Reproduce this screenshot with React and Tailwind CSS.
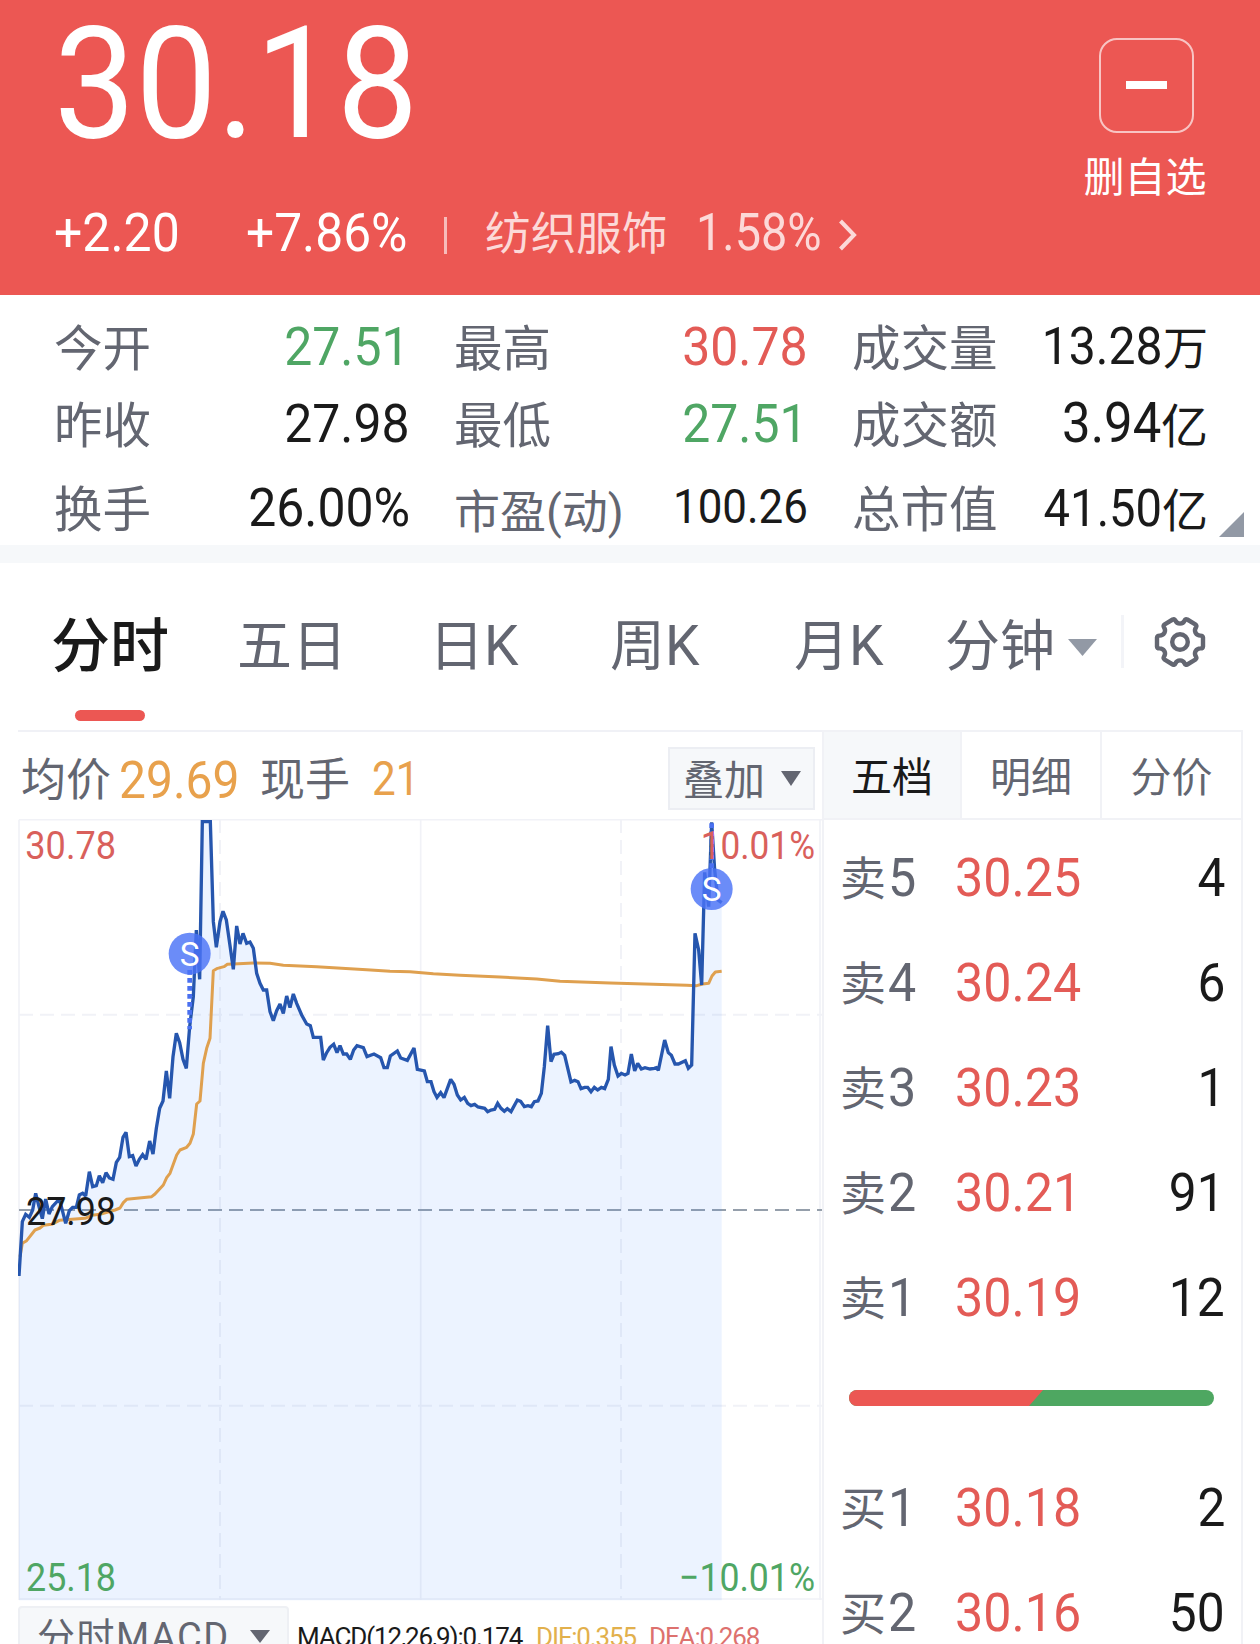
const COLORS = {
  red: "text-[#e35b56]",
  green: "text-[#4fa664]",
  dark: "text-[#1a1a1a]",
};

const stats = [
  { label: "今开", value: "27.51", color: "green" },
  { label: "最高", value: "30.78", color: "red" },
  { label: "成交量", value: "13.28", unit: "万", size: "text-[52px]", unitSize: "text-[45px]" },
  { label: "昨收", value: "27.98" },
  { label: "最低", value: "27.51", color: "green" },
  { label: "成交额", value: "3.94", unit: "亿", size: "text-[55px]", unitSize: "text-[47px]" },
  { label: "换手", value: "26.00%" },
  { label: "市盈(动)", value: "100.26", size: "text-[47.5px]", labelSize: "text-[46px]" },
  { label: "总市值", value: "41.50", unit: "亿", size: "text-[51px]", unitSize: "text-[46px]" },
];

const sells = [
  { side: "卖", level: 5, price: "30.25", qty: 4 },
  { side: "卖", level: 4, price: "30.24", qty: 6 },
  { side: "卖", level: 3, price: "30.23", qty: 1 },
  { side: "卖", level: 2, price: "30.21", qty: 91 },
  { side: "卖", level: 1, price: "30.19", qty: 12 },
];

const buys = [
  { side: "买", level: 1, price: "30.18", qty: 2 },
  { side: "买", level: 2, price: "30.16", qty: 50 },
];

// chart space: three units per pixel
const PRICE =
  "57,1398 67,1235 77,1213 88,1222 98,1200 107,1150 117,1190 127,1226 137,1167 147,1212 157,1190 178,1167 188,1205 197,1240 208,1202 218,1192 229,1192 238,1155 248,1150 257,1158 268,1085 278,1130 289,1127 298,1097 308,1118 318,1088 328,1104 339,1108 349,1057 359,1042 369,982 378,967 388,1040 398,1037 408,1068 418,1048 428,1034 438,1048 449,993 459,1032 469,955 479,895 489,873 499,783 509,865 519,740 529,670 539,698 549,748 559,775 569,650 580,560 589,360 599,508 607,35 631,35 640,335 649,412 660,335 669,304 679,330 689,400 700,478 710,348 720,402 729,370 740,400 750,396 760,415 770,490 780,520 790,540 800,540 810,605 820,632 830,602 840,582 850,610 860,558 870,593 880,552 890,580 905,615 920,642 931,647 940,682 962,682 970,750 980,728 990,712 1001,703 1011,728 1020,707 1030,732 1040,732 1051,748 1061,720 1071,707 1090,713 1101,740 1122,732 1142,743 1152,773 1162,773 1171,738 1192,723 1202,744 1222,751 1242,714 1252,778 1273,783 1282,815 1293,815 1302,845 1311,862 1322,848 1332,863 1352,808 1362,823 1372,855 1382,870 1393,862 1403,880 1413,887 1424,883 1434,891 1454,895 1463,905 1473,900 1484,898 1493,880 1503,895 1513,904 1522,896 1533,905 1552,870 1562,874 1573,890 1584,887 1594,890 1603,875 1614,873 1624,850 1633,770 1643,647 1653,755 1662,733 1675,731 1684,727 1694,736 1713,816 1724,811 1734,815 1743,836 1754,832 1763,832 1773,845 1783,832 1793,840 1804,832 1814,836 1825,808 1833,710 1843,765 1854,798 1864,790 1875,795 1884,790 1894,732 1904,783 1913,760 1924,777 1935,773 1950,777 1963,775 1969,773 1975,781 1994,690 2005,728 2014,736 2025,762 2035,762 2056,752 2065,775 2075,765 2085,370 2096,420 2105,525 2114,187 2126,290 2135,37 2144,180 2154,270 2165,278";

const AVERAGE =
  "60,1340 67,1300 80,1292 105,1260 120,1254 130,1246 155,1243 178,1231 255,1225 275,1216 300,1213 345,1200 360,1194 370,1178 380,1168 455,1160 465,1152 490,1125 500,1103 510,1090 530,1035 540,1020 560,1012 570,1000 580,972 590,882 600,873 610,760 620,715 630,685 640,482 650,476 672,470 682,463 715,461 760,459 810,460 850,466 950,470 1100,479 1170,484 1230,485 1300,491 1380,496 1500,501 1610,507 1680,514 1830,519 1960,523 2060,526 2090,527 2108,522 2126,520 2136,498 2146,486 2165,484";

function Caret({ className }) {
  return (
    <svg viewBox="0 0 30 18" preserveAspectRatio="none" className={className}>
      <path d="M0 0H30L15 18Z" fill="currentColor" />
    </svg>
  );
}

function Gear() {
  return (
    <svg viewBox="0 0 52 52" className="h-[52px] w-[52px]" fill="none" stroke="#636671" strokeWidth="4.4" strokeLinejoin="round">
      <path d="M21.3 4.4Q22.6 7.6 26 7.6Q29.4 7.6 30.7 4.4Q31.4 2.6 33.3 3.5L41.3 8.4Q43 9.6 42 11.4Q40.1 14 41.6 16.9Q43.2 19.6 46.4 19.6Q48.8 19.7 49 21.6V30.4Q48.8 32.3 46.4 32.4Q43.2 32.4 41.6 35.1Q40.1 38 42 40.6Q43 42.4 41.3 43.6L33.3 48.5Q31.4 49.4 30.7 47.6Q29.4 44.4 26 44.4Q22.6 44.4 21.3 47.6Q20.6 49.4 18.7 48.5L10.7 43.6Q9 42.4 10 40.6Q11.9 38 10.4 35.1Q8.8 32.4 5.6 32.4Q3.2 32.3 3 30.4V21.6Q3.2 19.7 5.6 19.6Q8.8 19.6 10.4 16.9Q11.9 14 10 11.4Q9 9.6 10.7 8.4L18.7 3.5Q20.6 2.6 21.3 4.4Z" />
      <circle cx="26" cy="26" r="7.8" />
    </svg>
  );
}

function Header() {
  return (
    <header className="flex h-[295px] justify-between bg-[#ec5753] pr-[53px] pl-[54px] text-white">
      <div className="flex flex-col">
        <div className="h-[197px] pt-[6px]">
          <span className="inline-block origin-left scale-x-[0.93] text-[156px] leading-none">30.18</span>
        </div>
        <div className="flex h-[72px] items-center leading-none">
          <span className="w-[192px]">
            <span className="inline-block origin-left scale-x-[0.925] text-[54px]">+2.20</span>
          </span>
          <span className="w-[198px]">
            <span className="inline-block origin-left scale-x-[0.92] text-[54px]">+7.86%</span>
          </span>
          <span className="mt-1 h-[37px] w-[3px] bg-white/60" />
          <div className="flex items-center pl-[38px] text-[#fcd9d8]">
            <span className="w-[211px] pt-[3px] text-[45.7px]">纺织服饰</span>
            <span className="w-[143px]">
              <span className="inline-block origin-left scale-x-[0.9] text-[52px]">1.58%</span>
            </span>
            <svg viewBox="0 0 18 32" className="mt-1 h-8 w-[18px]" fill="none" stroke="currentColor" strokeWidth="4">
              <path d="M1.5 2L15 16L1.5 30" />
            </svg>
          </div>
        </div>
      </div>
      <div className="flex w-[124px] flex-col items-center pt-[38px]">
        <div className="ml-[2px] flex h-[95px] w-[95px] items-center justify-center rounded-[18px] border-[2.5px] border-white/65">
          <span className="mb-0.5 h-2 w-[41px] bg-white" />
        </div>
        <span className="mt-[25px] text-[41px] leading-none whitespace-nowrap">删自选</span>
      </div>
    </header>
  );
}

function Stat({ label, value, unit, color = "dark", size = "text-[54px]", labelSize = "text-[48.5px]", unitSize }) {
  return (
    <div className="flex items-center justify-between leading-none whitespace-nowrap">
      <span className={`pt-[7px] text-[#636671] ${labelSize}`}>{label}</span>
      <span className={`flex items-center ${COLORS[color]}`}>
        <span className={`inline-block origin-right scale-x-[0.925] ${size}`}>{value}</span>
        {unit && <span className={`pt-[6px] ${unitSize}`}>{unit}</span>}
      </span>
    </div>
  );
}

function Stats() {
  return (
    <section className="relative h-[250px] pt-[13px] pr-[52px] pl-[54px]">
      <div className="grid grid-cols-[356px_354px_356px] grid-rows-[77px_77px_92px] gap-x-[44px]">
        {stats.map((item, i) => (
          <Stat key={i} {...item} />
        ))}
      </div>
      <svg viewBox="0 0 25 25" className="absolute right-[16px] bottom-2 h-[25px] w-[25px]">
        <path d="M25 0V25H0Z" fill="#9299a5" />
      </svg>
    </section>
  );
}

function Tabs() {
  return (
    <nav className="flex h-[168px] items-start text-[55px] leading-none whitespace-nowrap text-[#636671]">
      <div className="ml-[51px] flex w-[186px] flex-col pt-[54px]">
        <span className="text-[59px] font-medium text-[#1a1a1a]">分时</span>
        <span className="mt-[34px] ml-[24px] h-[11px] w-[70px] rounded-full bg-[#ec5753]" />
      </div>
      <span className="w-[192px] pt-[56px]">五日</span>
      <span className="w-[181px] pt-[56px]">日K</span>
      <span className="w-[184px] pt-[56px]">周K</span>
      <span className="w-[151px] pt-[56px]">月K</span>
      <span className="w-[123px] pt-[56px]">分钟</span>
      <Caret className="mt-[76px] h-[17px] w-[29px] text-[#9299a5]" />
      <span className="mt-[52px] ml-6 h-[53px] w-[3px] bg-[#f3f4f8]" />
      <div className="mt-[53px] ml-[30px]">
        <Gear />
      </div>
    </nav>
  );
}

function ChartBar() {
  return (
    <div className="flex h-[90px] items-center border-t-2 border-[#f0f1f6] pr-[7px] pl-[3px] leading-none">
      <span className="w-[98px] pt-2 text-[45px] text-[#636671]">均价</span>
      <span className="w-[141px] pt-2">
        <span className="inline-block origin-left scale-x-[0.94] text-[51px] text-[#e8a14c]">29.69</span>
      </span>
      <span className="w-[112px] pt-2 text-[45px] text-[#636671]">现手</span>
      <span className="pt-1.5">
        <span className="inline-block origin-left scale-x-[0.88] text-[48px] text-[#e8a14c]">21</span>
      </span>
      <div className="mt-1 ml-auto flex h-[63px] w-[147px] items-center border-2 border-[#eceef3] bg-[#f6f8fa] pl-[13px] text-[#636671]">
        <span className="pt-[6px] text-[41px]">叠加</span>
        <Caret className="ml-[16px] h-[15px] w-5" />
      </div>
    </div>
  );
}

function Marker({ x, y, from, to }) {
  return (
    <g>
      <line x1={x} x2={x} y1={from} y2={to} stroke="#4a70f0" strokeWidth="14" strokeDasharray="14 10" />
      <circle cx={x} cy={y} r="63" fill="#4a73f7" fillOpacity="0.82" />
      <text x={x} y={y + 36} fontSize="100" textAnchor="middle" fill="#fff">
        S
      </text>
    </g>
  );
}

function Chart() {
  return (
    <svg viewBox="54 27 2412 2346" className="block h-[782px] w-[804px]" fontFamily="Roboto, sans-serif">
      <g stroke="#f1f2f7" strokeWidth="6" fill="none">
        <path d="M57 29H2466M1262 29V2370M2460 29V2370M57 29V2370M57 2367H2466" strokeWidth="5" />
        <path d="M660 27V2370M1863 27V2370M57 614H2466M57 1787H2466" strokeDasharray="42 21" />
      </g>
      <path d="M57 1200H2466" stroke="#959fab" strokeWidth="6" strokeDasharray="42 21" />
      <polygon points={`${PRICE} 2165,2371 57,2371`} fill="#3784fa" fillOpacity="0.095" />
      <polyline points={AVERAGE} fill="none" stroke="#dfa04f" strokeWidth="9" strokeLinejoin="round" />
      <polyline points={PRICE} fill="none" stroke="#2656ae" strokeWidth="10" strokeMiterlimit="2" />
      <Marker x={569} y={431} from={480} to={658} />
      <Marker x={2135} y={237} from={40} to={180} />
      <g fontSize="118">
        <text x="76" y="146" textLength="272" lengthAdjust="spacingAndGlyphs" fill="#d9605b">30.78</text>
        <text x="2102" y="146" textLength="343" lengthAdjust="spacingAndGlyphs" fill="#d9605b">10.01%</text>
        <text x="78" y="1244" textLength="270" lengthAdjust="spacingAndGlyphs" fill="#1a1a1a">27.98</text>
        <text x="78" y="2344" textLength="270" lengthAdjust="spacingAndGlyphs" fill="#4fa664">25.18</text>
        <text x="2037" y="2344" textLength="408" lengthAdjust="spacingAndGlyphs" fill="#4fa664">−10.01%</text>
      </g>
    </svg>
  );
}

function Indicator() {
  return (
    <div className="flex pt-[5px] leading-none whitespace-nowrap">
      <div className="flex h-[60px] w-[271px] items-start rounded-[4px] border-2 border-[#eef0f4] bg-[#f6f8fa] pt-[10px] pl-[17px] text-[38px] text-[#636671]">
        <span className="w-[213px] tracking-[1.5px]">分时MACD</span>
        <Caret className="mt-[12px] h-[13px] w-5" />
      </div>
      <div className="flex pt-[18px] pl-2 text-[26px] tracking-[-1.12px]">
        <span className="w-[239px] text-[#1a1a1a]">MACD(12,26,9):0.174</span>
        <span className="w-[113px] text-[#e2b04c]">DIF:0.355</span>
        <span className="text-[#dd716e]">DEA:0.268</span>
      </div>
    </div>
  );
}

function Level({ side, level, price, qty }) {
  return (
    <div className="flex h-[105px] items-center pr-[16px] pl-[16px] leading-none">
      <span className="flex w-[115px] items-center text-[#636671]">
        <span className="w-[48px] pt-[3px] text-[46px]">{side}</span>
        <span className="inline-block origin-left scale-x-[0.93] text-[54px]">{level}</span>
      </span>
      <span className="inline-block origin-left scale-x-[0.93] text-[54px] text-[#e35b56]">{price}</span>
      <span className="ml-auto inline-block origin-right scale-x-[0.92] text-[54px] text-[#1a1a1a]">{qty}</span>
    </div>
  );
}

function OrderBook() {
  return (
    <aside className="h-[915px] w-[421px] overflow-hidden border-x-2 border-t-2 border-[#f1f2f6]">
      <div className="flex h-[88px] border-b-2 border-[#f1f2f6] text-[41px] leading-none text-[#636671]">
        <span className="flex w-[138px] items-center justify-center border-r-2 border-[#f1f2f6] bg-[#f6f8fa] pt-1.5 text-[#1a1a1a]">五档</span>
        <span className="flex w-[140px] items-center justify-center border-r-2 border-[#f1f2f6] pt-1.5">明细</span>
        <span className="flex flex-1 items-center justify-center pt-1.5">分价</span>
      </div>
      <div className="pt-[5px]">
        {sells.map((row) => (
          <Level key={row.level} {...row} />
        ))}
        <div className="flex h-[105px] items-center pb-[10px] pl-[25px]">
          <svg viewBox="0 0 365 16" className="h-4 w-[365px] rounded-full">
            <rect width="365" height="16" fill="#4ea761" />
            <path d="M0 0H194L180 16H0Z" fill="#ec5753" />
          </svg>
        </div>
        {buys.map((row) => (
          <Level key={row.level} {...row} />
        ))}
      </div>
    </aside>
  );
}

export default function App() {
  return (
    <div className="h-[1644px] w-[1260px] overflow-hidden bg-white font-['Roboto','Noto_Sans_CJK_SC',sans-serif]">
      <Header />
      <Stats />
      <div className="h-[18px] bg-[#f6f8fa]" />
      <Tabs />
      <div className="-mt-px flex h-[914px] overflow-hidden pl-[18px]">
        <div className="w-[804px]">
          <ChartBar />
          <div className="-mt-px">
            <Chart />
          </div>
          <Indicator />
        </div>
        <OrderBook />
      </div>
    </div>
  );
}
